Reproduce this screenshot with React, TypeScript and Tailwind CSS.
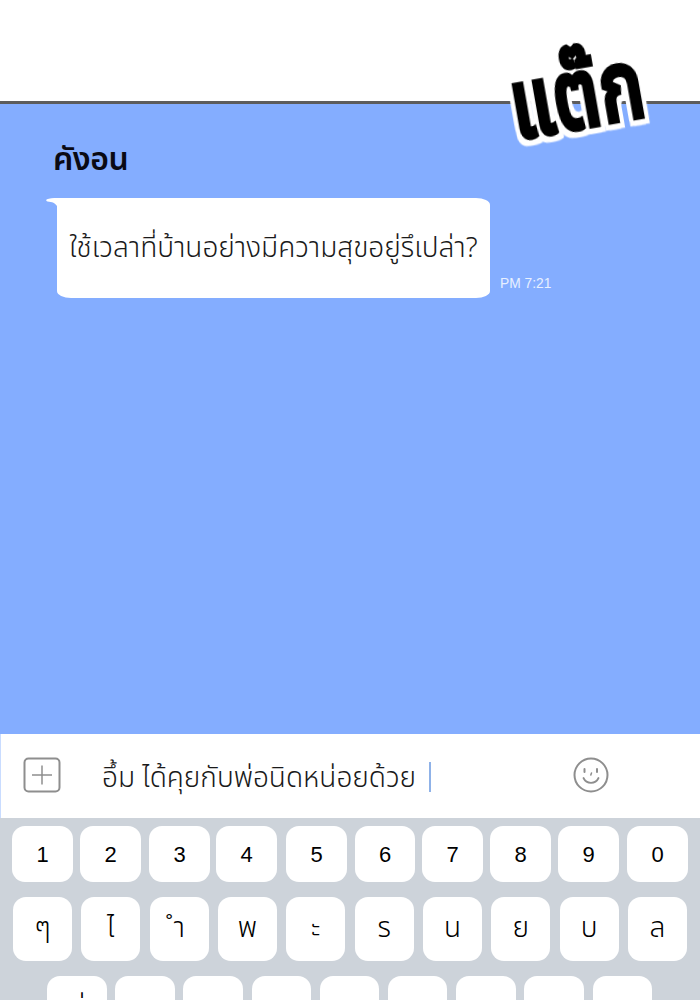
const thai = "font-['Noto_Sans_Thai','Noto_Sans','Liberation_Sans',sans-serif]"

const numbers = [
    { label: '1', className: 'ml-[12px] w-[61px]' },
    { label: '2', className: 'ml-[7px] w-[61px]' },
    { label: '3', className: 'ml-[8px] w-[61px]' },
    { label: '4', className: 'ml-[6px] w-[61px]' },
    { label: '5', className: 'ml-[9px] w-[61px]' },
    { label: '6', className: 'ml-[8px] w-[60px]' },
    { label: '7', className: 'ml-[7px] w-[61px]' },
    { label: '8', className: 'ml-[7px] w-[61px]' },
    { label: '9', className: 'ml-[7px] w-[61px]' },
    { label: '0', className: 'ml-[8px] w-[61px]' },
]

const letters = ['ๆ', 'ไ', 'ำ', 'พ', 'ะ', 'ร', 'น', 'ย', 'บ', 'ล']
const bottomRow = ['\u00a0่', '', '', '', '', '', '', '', '']

function Key({ label, className }: { label: string; className: string }) {
    return (
        <div className={`flex shrink-0 items-center justify-center rounded-[13px] bg-white text-black ${className}`}>
            {label}
        </div>
    )
}

export default function App() {
    return (
        <div className={`relative flex h-[1000px] w-[700px] flex-col overflow-hidden bg-white ${thai}`}>
            <div className="h-[101px] shrink-0 bg-white" />
            <div className="h-[3px] shrink-0 bg-[#5c5c5c]" />

            <div className="flex h-[630px] shrink-0 flex-col bg-[#84adff] pl-[47px]">
                <div className="ml-[6px] mt-[32px] text-[32px] font-semibold leading-[48px] tracking-[-0.5px] text-[#0a0a14]">คังอน</div>
                <div className="mt-[14px] flex items-end">
                    <div className="relative ml-[10px] flex h-[100px] w-[433px] items-center justify-center rounded-[14px/7px] rounded-tl-none bg-white">
                        <svg width="12" height="9" viewBox="0 0 12 9" className="absolute -left-[11px] top-0" fill="#ffffff">
                            <path d="M11.5 0C7 0 3 .4 1 1.2-.4 1.9.2 3 1.5 3.4 6 4 9.5 4.5 11.5 9z" />
                        </svg>
                        <span className="pt-[2px] text-[28px] font-light leading-[40px] text-[#1a1a1a]">ใช้เวลาที่บ้านอย่างมีความสุขอยู่รึเปล่า?</span>
                    </div>
                    <span className="mb-[6px] ml-[10px] font-['Liberation_Sans',sans-serif] text-[13.8px] leading-[16px] text-[#e8f0ff]">PM 7:21</span>
                </div>
            </div>

            <div className="flex h-[84px] shrink-0 items-center border-l border-[#c9dcff] bg-white pl-[22px]">
                <svg width="38" height="36" viewBox="0 0 38 36" fill="none" stroke="#8e8e8e" className="mb-[3px] shrink-0">
                    <rect x="1.5" y="1.5" width="35" height="33" rx="4" strokeWidth="2" />
                    <path d="M19 8.5v19M9 18h20" strokeWidth="1.5" />
                </svg>
                <span className="ml-[41px] mt-[5px] text-[28px] font-light leading-[40px] text-[#1a1a1a]">อึ้ม ได้คุยกับพ่อนิดหน่อยด้วย</span>
                <div className="ml-[13px] mt-[2px] h-[30px] w-[2px] shrink-0 bg-[#8fb2e8]" />
                <svg width="36" height="36" viewBox="0 0 36 36" fill="none" stroke="#8e8e8e" className="mb-[3px] ml-[142px] shrink-0">
                    <circle cx="18" cy="18" r="16.5" strokeWidth="2" />
                    <path d="M10.5 21c3 6.5 12 6.5 15 0" strokeWidth="1.8" strokeLinecap="round" />
                    <path d="M11.5 12v3M24 12v3" strokeWidth="2" strokeLinecap="round" />
                    <path d="M18.5 16l-.7 2" strokeWidth="1.5" strokeLinecap="round" />
                </svg>
            </div>

            <div className="flex flex-1 flex-col bg-[#cdd3da] pt-[8px]">
                <div className="flex h-[56px] font-['Liberation_Sans',sans-serif] text-[22px]">
                    {numbers.map((key) => (
                        <Key key={key.label} label={key.label} className={key.className} />
                    ))}
                </div>
                <div className="mt-[15px] flex h-[64px] gap-[9.33px] pl-[13px] text-[28px] font-light">
                    {letters.map((label) => (
                        <Key key={label} label={label} className="w-[59px]" />
                    ))}
                </div>
                <div className="mt-[15px] flex h-[64px] gap-[8.7px] pl-[47px] text-[28px] font-light">
                    {bottomRow.map((label, i) => (
                        <Key key={i} label={label} className={i === 0 ? 'w-[59.5px] pl-[10px]' : 'w-[59.5px]'} />
                    ))}
                </div>
            </div>

            <div className="absolute left-[522px] top-[80px] origin-bottom-left -rotate-[10deg] scale-y-[1.35] text-[72px] font-medium leading-[90px] tracking-[1px] text-black [-webkit-text-stroke:4px_black] [filter:drop-shadow(4px_0_0_white)_drop-shadow(-4px_0_0_white)_drop-shadow(0_4px_0_white)_drop-shadow(0_-4px_0_white)]">
                แต๊ก
            </div>
        </div>
    )
}
